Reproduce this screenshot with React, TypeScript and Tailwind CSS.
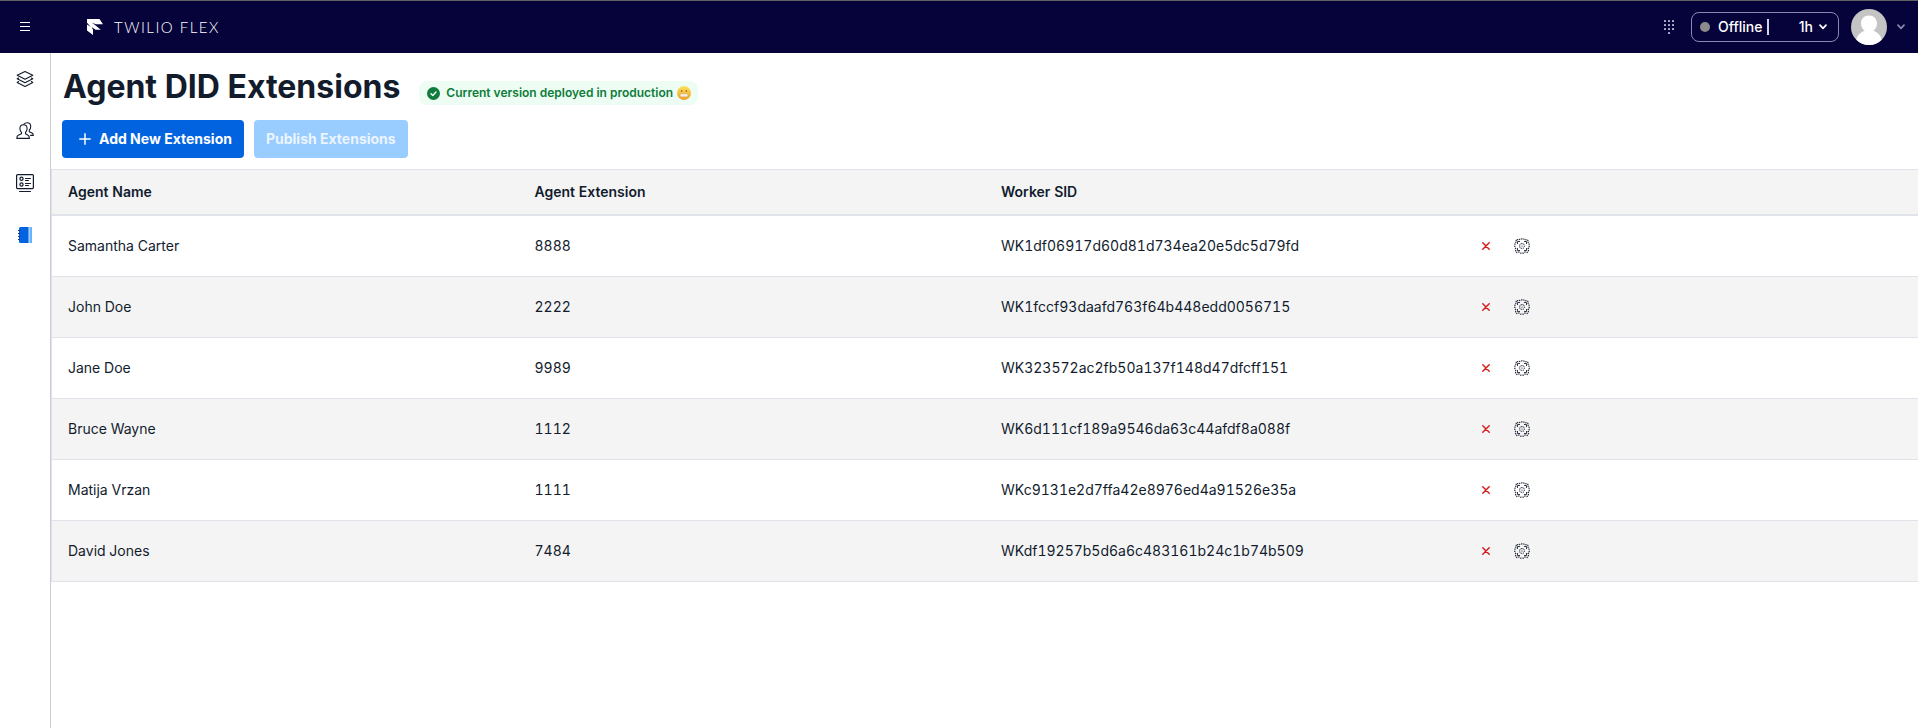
import React from "react";

const agents = [
  { name: "Samantha Carter", extension: "8888", sid: "WK1df06917d60d81d734ea20e5dc5d79fd" },
  { name: "John Doe", extension: "2222", sid: "WK1fccf93daafd763f64b448edd0056715" },
  { name: "Jane Doe", extension: "9989", sid: "WK323572ac2fb50a137f148d47dfcff151" },
  { name: "Bruce Wayne", extension: "1112", sid: "WK6d111cf189a9546da63c44afdf8a088f" },
  { name: "Matija Vrzan", extension: "1111", sid: "WKc9131e2d7ffa42e8976ed4a91526e35a" },
  { name: "David Jones", extension: "7484", sid: "WKdf19257b5d6a6c483161b24c1b74b509" },
];

function MenuIcon() {
  return (
    <svg width="10" height="10" viewBox="0 0 10 10" stroke="#fff" aria-hidden="true">
      <path d="M0 .5h10M0 4.5h10M0 8.5h10" />
    </svg>
  );
}

function FlexLogo() {
  return (
    <svg width="16" height="16" viewBox="0 0 16 16" fill="#fff" aria-hidden="true">
      <path d="M0 0h12.500L16 5.200H9L5 3.800 9 6.800 13.800 10.800H8.500L4.600 8 6 10.800V16L0 11.400V5.600l3.600 2.200L0 3.800z" />
    </svg>
  );
}

function DialpadIcon() {
  const dots = [0, 1, 2].flatMap((c) => [0, 1, 2].map((r) => [c * 4, r * 4]));
  return (
    <svg width="10" height="14" viewBox="0 0 10 14" fill="#b3b1cf" aria-hidden="true">
      {dots.map(([x, y]) => (
        <rect key={`${x}-${y}`} x={x} y={y} width="2" height="2" rx=".6" />
      ))}
      <rect x="4" y="12" width="2" height="2" rx=".6" />
    </svg>
  );
}

function Chevron({ color }: { color: string }) {
  return (
    <svg width="8" height="6" viewBox="0 0 8 6" fill="none" stroke={color} strokeWidth="1.7" strokeLinecap="round" strokeLinejoin="round" aria-hidden="true">
      <path d="M1 1.2 4 4.4 7 1.2" />
    </svg>
  );
}

function Avatar() {
  return (
    <svg width="36" height="36" viewBox="0 0 36 36" aria-hidden="true">
      <defs>
        <clipPath id="avatar-clip">
          <circle cx="18" cy="18" r="18" />
        </clipPath>
      </defs>
      <g clipPath="url(#avatar-clip)">
        <rect width="36" height="36" fill="#c4c4c4" />
        <path d="M18 6.500c4.800 0 8 3.400 8 8 0 3.300-1.500 5.900-3.700 7.300C27.500 23.300 31 27.500 31.500 36h-27C5 27.500 8.500 23.300 13.700 21.800 11.500 20.400 10 17.800 10 14.500c0-4.600 3.200-8 8-8z" fill="#fff" />
      </g>
    </svg>
  );
}

function LayersIcon() {
  return (
    <svg width="18" height="18" viewBox="0 0 18 18" fill="none" stroke="#121c2d" strokeWidth="1.100" strokeLinejoin="round" strokeLinecap="round" aria-hidden="true">
      <path d="M9 1.500 1.200 5.200 9 9.200l7.800-4z" />
      <path d="M2.600 8 1.200 8.800 9 12.800l7.800-4-1.400-.8M2.600 11.600l-1.400.8L9 16.400l7.800-4-1.400-.8" />
    </svg>
  );
}

function AgentsIcon() {
  return (
    <svg width="18" height="18" viewBox="0 0 18 18" fill="none" stroke="#121c2d" strokeWidth="1.100" strokeLinejoin="round" strokeLinecap="round" aria-hidden="true">
      <path d="M7.500 2.800c-2.400 0-3.600 1.700-3.600 3.700 0 1.800.7 3 1.600 3.900v1.300l-3.300 1.500C1.200 13.700.8 14.700.8 16.400h12.600c0-1.700-.4-2.700-1.400-3.200l-2.500-1.500v-1.300c.9-.9 1.600-2.100 1.600-3.900 0-2-1.200-3.700-3.600-3.700z" />
      <path d="M7.800 2.300C8.500 1.300 9.700.7 11.100.7c2.300 0 3.600 1.700 3.600 3.700 0 1.700-.6 2.900-1.400 3.700v1.600l2.700 1.200c.9.400 1.300 1.300 1.300 2.500h-2.700" />
    </svg>
  );
}

function DirectoryIcon() {
  return (
    <svg width="18" height="18" viewBox="0 0 18 18" fill="none" stroke="#121c2d" strokeLinecap="round" aria-hidden="true">
      <rect x=".6" y=".6" width="16.800" height="14" rx="1" strokeWidth="1.200" />
      <circle cx="5.500" cy="4.800" r="1.600" strokeWidth="1.200" />
      <circle cx="5.500" cy="10.500" r="1.600" strokeWidth="1.200" />
      <path d="M9.500 4.500h5M9.500 6.500h3M9.500 9.500h5M9.500 11.500h3M3.500 17.500h11" />
    </svg>
  );
}

function NotebookIcon() {
  return (
    <svg width="14" height="16" viewBox="0 0 14 16" aria-hidden="true">
      <rect x="1" width="13" height="16" rx="1.500" fill="#0263e0" />
      <path d="M11 0h1.500A1.500 1.500 0 0 1 14 1.500v13a1.500 1.500 0 0 1-1.500 1.500H11z" fill="#66b3ff" />
      <path d="M11 0v16" stroke="#fff" strokeWidth=".8" />
      <path d="M0 3.500h1.500M0 6.500h1.500M0 9.500h1.500M0 12.500h1.500" stroke="#06033a" strokeWidth=".8" />
    </svg>
  );
}

function CheckIcon() {
  return (
    <svg width="13" height="13" viewBox="0 0 13 13" aria-hidden="true">
      <circle cx="6.500" cy="6.500" r="6.500" fill="#0e7c3a" />
      <path d="M4 6.700 5.800 8.400 9 5" fill="none" stroke="#fff" strokeWidth="1.400" strokeLinecap="round" strokeLinejoin="round" />
    </svg>
  );
}

function GrimaceIcon() {
  return (
    <svg width="14" height="14" viewBox="0 0 14 14" role="img" aria-label="Grimacing face">
      <defs>
        <linearGradient id="face" x1="0" y1="0" x2="0" y2="1">
          <stop offset="0" stopColor="#fde25a" />
          <stop offset="1" stopColor="#eda02c" />
        </linearGradient>
      </defs>
      <circle cx="7" cy="7" r="7" fill="url(#face)" />
      <circle cx="4.700" cy="5" r=".8" fill="#7a5218" />
      <circle cx="9.300" cy="5" r=".8" fill="#7a5218" />
      <rect x="3.200" y="7.800" width="7.600" height="3" rx="1.400" fill="#fff" stroke="#c08a3c" strokeWidth=".4" />
      <path d="M3.400 9.300h7.200M5.500 7.900v2.800M7 7.900v2.800M8.500 7.900v2.800" stroke="#dccba8" strokeWidth=".3" />
    </svg>
  );
}

function PlusIcon() {
  return (
    <svg width="12" height="12" viewBox="0 0 12 12" stroke="#fff" strokeWidth="1.500" strokeLinecap="round" aria-hidden="true">
      <path d="M6 .8v10.400M.8 6h10.400" />
    </svg>
  );
}

function CloseIcon() {
  return (
    <svg width="8" height="8" viewBox="0 0 8 8" stroke="#d61f1f" strokeWidth="1.500" strokeLinecap="round" aria-hidden="true">
      <path d="M.8.8l6.400 6.400M7.200.8.8 7.200" />
    </svg>
  );
}

function GearIcon() {
  return (
    <svg width="16" height="16" viewBox="0 0 16 16" fill="none" stroke="#1d2433" aria-hidden="true">
      <path
        d="M3 1.500 5 2 6.500.8h3L11 2l2-.5L14.500 3 14 5l1.200 1.500v3L14 11l.5 2-1.500 1.500-2-.5-1.500 1.200h-3L5 14l-2 .5L1.500 13 2 11 .8 9.500v-3L2 5l-.5-2z"
        strokeDasharray="1.300 1"
        strokeWidth="1.200"
      />
      <path d="M3.500 6V3.500H6M10 3.500h2.500V6M12.500 10v2.500H10M6 12.500H3.500V10" strokeWidth=".9" />
      <rect x="5.700" y="5.700" width="4.600" height="4.600" rx="1.600" strokeDasharray="1.300 .7" />
      <circle cx="8" cy="8" r=".6" fill="#1d2433" stroke="none" />
    </svg>
  );
}

const navItems = [
  { label: "Tasks", icon: <LayersIcon /> },
  { label: "Teams", icon: <AgentsIcon /> },
  { label: "Queues", icon: <DirectoryIcon /> },
  { label: "Extensions", icon: <NotebookIcon /> },
];

export default function App() {
  return (
    <div className="flex min-h-screen flex-col bg-white font-['Inter',sans-serif] text-sm text-[#121c2d]">
      <header className="flex h-[53px] items-center border-t border-[#5f5f5f] bg-[#06033a] text-white">
        <button type="button" aria-label="Menu" className="flex h-10 w-[50px] items-center justify-center">
          <MenuIcon />
        </button>
        <a href="#" className="ml-[37px] flex items-center gap-[11px]">
          <FlexLogo />
          <span className="font-['Lato',sans-serif] text-[15px] leading-5 font-light tracking-widest">TWILIO FLEX</span>
        </a>
        <div className="ml-auto flex items-center pr-[13px]">
          <button type="button" aria-label="Dialpad" className="mr-4 flex p-px">
            <DialpadIcon />
          </button>
          <button type="button" className="flex h-[30px] w-[148px] items-center rounded-lg border border-[#8a88b0] pr-[9px] pl-2 font-medium">
            <span className="mr-2 size-[10px] rounded-full bg-[#8b8b8b]" />
            <span>Offline</span>
            <span className="ml-1 h-4 w-0.5 bg-[#d5d4e2]" />
            <span className="mr-[6px] ml-auto">1h</span>
            <span className="mr-0.5">
              <Chevron color="#fff" />
            </span>
          </button>
          <button type="button" aria-label="Account" className="ml-3 flex items-center gap-[10px]">
            <Avatar />
            <Chevron color="#8a88b0" />
          </button>
        </div>
      </header>
      <div className="flex flex-1">
        <nav className="flex w-[51px] shrink-0 flex-col border-r border-[#cacdd8]">
          {navItems.map((item) => (
            <a key={item.label} href="#" aria-label={item.label} className="flex h-[52px] items-center justify-center">
              {item.icon}
            </a>
          ))}
        </nav>
        <main className="min-w-0 flex-1">
          <div className="flex items-end gap-[19px] px-3 pt-[14px]">
            <h1 className="text-[32px] leading-10 font-bold">Agent DID Extensions</h1>
            <div className="mb-0.5 flex h-6 items-center rounded-lg bg-[#edfdf3] pr-[7px] pl-2 text-xs font-semibold text-[#0e7c3a]">
              <CheckIcon />
              <span className="mr-1 ml-[6px]">Current version deployed in production</span>
              <GrimaceIcon />
            </div>
          </div>
          <div className="flex gap-[10px] px-[11px] pt-[13px] pb-[11px]">
            <button type="button" className="flex h-[38px] items-center gap-2 rounded bg-[#0263e0] pr-3 pl-[17px] font-bold text-white">
              <PlusIcon />
              Add New Extension
            </button>
            <button type="button" disabled className="h-[38px] rounded bg-[#99cdff] px-3 font-bold text-[#ebf4ff]">
              Publish Extensions
            </button>
          </div>
          <table className="w-full table-fixed border-separate border-spacing-0 border-t border-l border-[#e1e3ea] text-left tabular-nums">
            <thead className="bg-[#f4f4f5]">
              <tr className="h-[46px]">
                <th className="border-b-2 border-[#e1e3ea] px-4 font-semibold">Agent Name</th>
                <th className="border-b-2 border-[#e1e3ea] px-4 font-semibold">Agent Extension</th>
                <th className="border-b-2 border-[#e1e3ea] px-4 font-semibold">Worker SID</th>
                <th aria-label="Actions" className="border-b-2 border-[#e1e3ea] px-4" />
              </tr>
            </thead>
            <tbody>
              {agents.map((agent) => (
                <tr key={agent.sid} className="h-[61px] even:bg-[#f4f4f5]">
                  <td className="border-b border-[#e1e3ea] px-4">{agent.name}</td>
                  <td className="border-b border-[#e1e3ea] px-4">{agent.extension}</td>
                  <td className="border-b border-[#e1e3ea] px-4">{agent.sid}</td>
                  <td className="border-b border-[#e1e3ea] px-4">
                    <div className="flex items-center">
                      <button type="button" aria-label={`Delete ${agent.name}`} className="flex size-9 items-center justify-center">
                        <CloseIcon />
                      </button>
                      <button type="button" aria-label={`Edit ${agent.name}`} className="flex size-9 items-center justify-center">
                        <GearIcon />
                      </button>
                    </div>
                  </td>
                </tr>
              ))}
            </tbody>
          </table>
        </main>
      </div>
    </div>
  );
}
